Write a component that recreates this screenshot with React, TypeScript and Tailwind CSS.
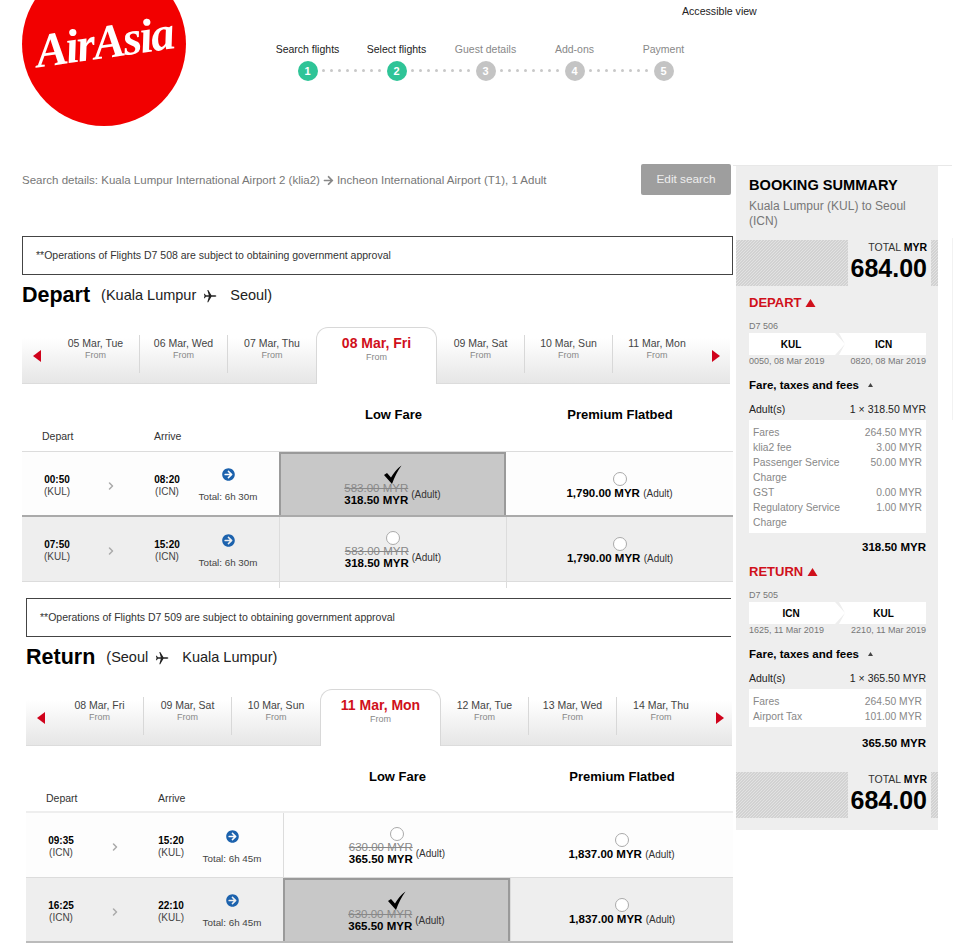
import { ChevronRight } from 'lucide-react';
import { FaArrowCircleRight, FaArrowRight } from 'react-icons/fa';

const steps = [
  { label: 'Search flights', done: true },
  { label: 'Select flights', done: true },
  { label: 'Guest details', done: false },
  { label: 'Add-ons', done: false },
  { label: 'Payment', done: false },
];

function Triangle({ className }: { className: string }) {
  return (
    <svg viewBox="0 0 10 8" className={className} fill="currentColor">
      <path d="M5 0 L10 8 L0 8 Z" />
    </svg>
  );
}

function Check() {
  return (
    <svg viewBox="0 0 20 20" className="w-[20px] h-[20px] text-black" fill="currentColor">
      <path d="M1 10 L4 8 L8 12.5 C10.5 8 14 3.5 18.5 0.5 C14.5 6 11.5 12 9 19 Z" />
    </svg>
  );
}

function PlaneIcon() {
  return (
    <svg viewBox="0 0 24 24" className="w-[14px] h-[14px] mx-[7px] text-[#222]" fill="currentColor">
      <path d="M23 12 C23 11 21.5 10.7 20 10.7 H14.5 L9 1.5 H7.4 L10 10.7 H5 L3 8 H1.6 L2.6 12 L1.6 16 H3 L5 13.3 H10 L7.4 22.5 H9 L14.5 13.3 H20 C21.5 13.3 23 13 23 12 Z" />
    </svg>
  );
}

function Steps() {
  return (
    <div className="flex w-[445px] ml-[77px] pt-[43px]">
      {steps.map((s, i) => (
        <div key={s.label} className="w-[89px] relative flex flex-col items-center">
          <span className={`text-[10.5px] leading-[13px] ${s.done ? 'text-[#222]' : 'text-[#888]'}`}>{s.label}</span>
          <div
            className={`mt-[5px] w-[20px] h-[20px] rounded-full flex items-center justify-center text-white text-[11px] font-bold ${s.done ? 'bg-[#2fc497]' : 'bg-[#c4c4c4]'}`}
          >
            {i + 1}
          </div>
          {i < 4 && (
            <div className="absolute left-[59px] top-[26px] flex gap-[5px]">
              {[0, 1, 2, 3, 4, 5, 6, 7].map((d) => (
                <span key={d} className="w-[3px] h-[3px] rounded-full bg-[#c8c8c8]" />
              ))}
            </div>
          )}
        </div>
      ))}
    </div>
  );
}

function DateStrip({ dates, active, className }: { dates: string[]; active: number; className: string }) {
  return (
    <div className={`flex h-[57px] bg-gradient-to-b from-white from-[20%] to-[#e6e6e6] border-b border-[#dcdcdc] ${className}`}>
      <div className="w-[30px] flex items-center pl-[11px] pt-[1px]">
        <div className="w-0 h-0 border-y-[6px] border-y-transparent border-r-[8px] border-r-[#d0021b]" />
      </div>
      {dates.map((d, i) =>
        i === active ? (
          <div
            key={d}
            className="w-[121px] -mb-px bg-white border border-b-0 border-[#d8d8d8] rounded-t-xl flex flex-col items-center pt-[7px]"
          >
            <span className="text-[14px] leading-[16px] font-bold text-[#d0101b]">{d}</span>
            <span className="text-[9px] leading-[11px] text-[#888] mt-[1px]">From</span>
          </div>
        ) : (
          <div key={d} className="w-[88px] pt-[8px] h-[46px] flex flex-col items-center">
            <div className={`w-full flex flex-col items-center h-[38px] ${i === active - 1 || i === dates.length - 1 ? '' : 'border-r border-[#d8d8d8]'}`}>
              <span className="text-[10.5px] leading-[14px] text-[#444] pt-[1px]">{d}</span>
              <span className="text-[9px] leading-[10px] text-[#888]">From</span>
            </div>
          </div>
        ),
      )}
      <div className="flex-1 flex items-center pl-[11px] pt-[1px]">
        <div className="w-0 h-0 border-y-[6px] border-y-transparent border-l-[8px] border-l-[#d0021b]" />
      </div>
    </div>
  );
}

type RowProps = {
  dep: string;
  arr: string;
  from: string;
  to: string;
  total: string;
  old: string;
  price: string;
  premium: string;
  gray: boolean;
  selected: boolean;
  bottom: string;
  tail?: boolean;
};

function FlightRow({ dep, arr, from, to, total, old, price, premium, gray, selected, bottom, tail }: RowProps) {
  return (
    <div className={`relative flex h-[65px] ${bottom} ${gray ? 'bg-[#eeeeee]' : 'bg-[#fdfdfd]'}`}>
      <div className="flex items-center pl-[6px] pt-[4px]">
        <div className="w-[58px] text-center text-[10px] leading-[12px] text-[#444]">
          <div className="font-bold text-black">{dep}</div>
          <div>({from})</div>
        </div>
        <div className="w-[50px] flex justify-center">
          <ChevronRight strokeWidth={3} className="w-[12px] h-[12px] text-[#aaa]" />
        </div>
        <div className="w-[62px] text-center text-[10px] leading-[12px] text-[#444]">
          <div className="font-bold text-black">{arr}</div>
          <div>({to})</div>
        </div>
        <div className="w-[60px] flex flex-col items-center text-[9.8px] leading-[12px] text-[#444] whitespace-nowrap">
          <FaArrowCircleRight className="w-[13px] h-[13px] text-[#1c62ad] mb-[10px]" />
          Total: {total}
        </div>
      </div>
      <div className="w-[21px]" />
      <div
        className={`w-[227px] flex flex-col items-center ${selected ? 'bg-[#c8c8c8] border-x-2 border-t-2 border-[#9a9a9a] pt-[11px]' : 'border-l border-[#dcdcdc] pt-[14px]'}`}
      >
        {selected ? <Check /> : <div className="w-[14px] h-[14px] rounded-full border border-[#aaa] bg-white" />}
        <div className={`flex items-end ${selected ? '-mt-[3px]' : 'mt-0'}`}>
          <div className="text-[11.5px] leading-[12px]">
            <div className="line-through text-[#888]">{old}</div>
            <div className="font-bold text-black">{price}</div>
          </div>
          <span className="text-[10px] leading-[10px] text-[#333] ml-[3px] mb-[6px]">(Adult)</span>
        </div>
      </div>
      <div className={`flex-1 flex flex-col items-center pt-[20px] ${gray ? 'border-l border-[#dcdcdc]' : ''}`}>
        <div className="w-[14px] h-[14px] rounded-full border border-[#aaa] bg-white" />
        <div className="text-[11.5px] leading-[14px] text-black">
          <span className="font-bold">{premium}</span> <span className="text-[10px] text-[#333]">(Adult)</span>
        </div>
      </div>
      {tail && (
        <>
          <div className="absolute left-[257px] top-[65px] w-px h-[6px] bg-[#dcdcdc]" />
          <div className="absolute left-[484px] top-[65px] w-px h-[6px] bg-[#dcdcdc]" />
        </>
      )}
    </div>
  );
}

function FlightSection({
  title,
  from,
  to,
  note,
  dates,
  active,
  children,
  className,
  noteClass,
  stripClass,
  headClass,
  labelClass,
  rowsClass,
}: {
  title: string;
  from: string;
  to: string;
  note: string;
  dates: string[];
  active: number;
  children: React.ReactNode;
  className: string;
  noteClass: string;
  stripClass: string;
  headClass: string;
  labelClass: string;
  rowsClass: string;
}) {
  return (
    <section className={className}>
      <div className={`h-[39px] border-[#444] flex items-center pl-[13px] text-[10.5px] text-[#333] ${noteClass}`}>{note}</div>
      <div className="h-[52px] flex items-start pt-[5px]">
        <h2 className="text-[21.5px] leading-[30px] font-bold text-black">{title}</h2>
        <div className="ml-[11px] mt-[1px] flex items-center h-[30px] text-[14.5px] text-[#222]">
          ({from}
          <PlaneIcon />
          <span className="ml-[6px]">{to})</span>
        </div>
      </div>
      <DateStrip dates={dates} active={active} className={stripClass} />
      <div className={`flex ${headClass}`}>
        <div className={`w-[258px] flex items-end text-[10.5px] leading-[14px] text-[#333] ${labelClass}`}>
          <span className="ml-[20px] w-[112px]">Depart</span>
          <span>Arrive</span>
        </div>
        <div className="w-[227px] text-center pt-[23px] text-[13px] leading-[15px] font-bold text-black">Low Fare</div>
        <div className="flex-1 text-center pt-[23px] text-[13px] leading-[15px] font-bold text-black">Premium Flatbed</div>
      </div>
      <div className={rowsClass}>{children}</div>
    </section>
  );
}

function TotalBar({ className }: { className: string }) {
  const hatch =
    'bg-[linear-gradient(135deg,#d2d2d2_25%,#e2e2e2_25%,#e2e2e2_50%,#d2d2d2_50%,#d2d2d2_75%,#e2e2e2_75%)] bg-[length:3px_3px]';
  return (
    <div className={`flex h-[46px] ${className}`}>
      <div className={`w-[112px] ${hatch}`} />
      <div className="flex-1 text-right pr-[4px] pt-[1px] bg-[#eeeeee]">
        <div className="text-[10.5px] leading-[12px] text-[#333]">
          TOTAL <span className="font-bold text-black">MYR</span>
        </div>
        <div className="text-[25px] leading-[31px] font-bold text-black">684.00</div>
      </div>
      <div className={`w-[7px] ${hatch}`} />
    </div>
  );
}

function Leg({
  label,
  code,
  a,
  b,
  ta,
  tb,
  each,
  fees,
  sum,
  sumClass,
}: {
  label: string;
  code: string;
  a: string;
  b: string;
  ta: string;
  tb: string;
  each: string;
  fees: { name: string; value: string }[];
  sum: string;
  sumClass: string;
}) {
  return (
    <div className="px-[13px]">
      <div className="flex items-center gap-[4px] text-[13px] leading-[16px] font-bold text-[#d0101b]">
        {label}
        <Triangle className="w-[11px] h-[8px]" />
      </div>
      <div className="mt-[10px] text-[9px] leading-[11px] text-[#777]">{code}</div>
      <div className="relative mt-[1px] w-[177px] h-[22px] bg-white flex items-center text-[10px] font-bold text-black">
        <span className="w-[84px] text-center">{a}</span>
        <span className="flex-1 text-center pl-[8px]">{b}</span>
        <div className="absolute left-[86px] top-0 w-[10px] h-[22px] bg-[#eeeeee] [clip-path:polygon(0_0,100%_50%,0_100%,40%_100%,100%_50%,40%_0)]" />
      </div>
      <div className="w-[177px] flex justify-between text-[9px] leading-[11px] mt-[1px] text-[#777]">
        <span>{ta}</span>
        <span>{tb}</span>
      </div>
      <div className="flex items-center gap-[5px] mt-[11px] text-[11.5px] leading-[14px] font-bold text-black">
        Fare, taxes and fees
        <Triangle className="w-[7px] h-[4px] ml-[3px] text-[#444]" />
      </div>
      <div className="w-[177px] flex justify-between mt-[10px] text-[10.5px] leading-[14px] text-[#222]">
        <span>Adult(s)</span>
        <span>1 × {each} MYR</span>
      </div>
      <div className="w-[177px] bg-white mt-[4px] px-[4px] pt-[5px] pb-[3px] text-[10.3px] leading-[15px] text-[#888]">
        {fees.map((f) => (
          <div key={f.name} className="flex justify-between">
            <span className="w-[100px]">{f.name}</span>
            <span>{f.value}</span>
          </div>
        ))}
      </div>
      <div className={`w-[177px] text-right text-[11.5px] leading-[14px] font-bold text-black ${sumClass}`}>{sum} MYR</div>
    </div>
  );
}

export default function App() {
  return (
    <div className="relative w-[959px] h-[946px] overflow-hidden bg-white font-['Liberation_Sans',Arial,sans-serif]">
      <div className="absolute left-[952px] top-[238px] w-px h-[182px] bg-[#f2f2f2]" />
      <div className="absolute left-[733px] top-[165px] w-[219px] h-px bg-[#e8e8e8]" />

      {/* Header */}
      <header className="flex h-[165px]">
        <div className="ml-[22px] -mt-[38px] w-[164px] h-[164px] rounded-full bg-[#f20000] flex items-center justify-center shrink-0">
          <span className="-rotate-[8deg] mt-[-4px] text-[48px] leading-[50px] italic font-bold tracking-[-2px] text-white font-['Liberation_Serif',serif]">
            AirAsia
          </span>
        </div>
        <Steps />
        <div className="ml-[-26px] pt-[5px] text-[10.6px] leading-[13px] text-[#222]">Accessible view</div>
      </header>

      <div className="flex">
        {/* Left column */}
        <div className="w-[736px] shrink-0">
          <div className="flex h-[71px] pl-[22px]">
            <div className="w-[619px] flex items-center h-[30px] pt-[1px] text-[11.5px] text-[#777]">
              Search details: Kuala Lumpur International Airport 2 (klia2)
              <FaArrowRight className="w-[11px] h-[11px] mx-[3px] text-[#888]" />
              Incheon International Airport (T1), 1 Adult
            </div>
            <button className="w-[90px] h-[31px] -mt-px bg-[#9e9e9e] rounded-[2px] text-[11.8px] text-[#eee]">Edit search</button>
          </div>

          <FlightSection
            className="ml-[22px] w-[711px]"
            noteClass="border"
            stripClass="w-[708px]"
            headClass="h-[67px]"
            labelClass="pb-[8px]"
            rowsClass="border-t border-[#dcdcdc]"
            title="Depart"
            from="Kuala Lumpur"
            to="Seoul"
            note="**Operations of Flights D7 508 are subject to obtaining government approval"
            dates={['05 Mar, Tue', '06 Mar, Wed', '07 Mar, Thu', '08 Mar, Fri', '09 Mar, Sat', '10 Mar, Sun', '11 Mar, Mon']}
            active={3}
          >
            <FlightRow dep="00:50" arr="08:20" from="KUL" to="ICN" total="6h 30m" old="583.00 MYR" price="318.50 MYR" premium="1,790.00 MYR" gray={false} selected bottom="border-b-2 border-[#aaaaaa]" />
            <FlightRow dep="07:50" arr="15:20" from="KUL" to="ICN" total="6h 30m" old="583.00 MYR" price="318.50 MYR" premium="1,790.00 MYR" gray selected={false} bottom="border-b border-[#dcdcdc]" tail />
          </FlightSection>

          <FlightSection
            className="ml-[26px] mt-[16px] w-[707px]"
            noteClass="border-y border-l w-[705px]"
            stripClass="w-[706px]"
            headClass="h-[65px]"
            labelClass="pb-[6px]"
            rowsClass="border-t-2 border-[#eeeeee]"
            title="Return"
            from="Seoul"
            to="Kuala Lumpur"
            note="**Operations of Flights D7 509 are subject to obtaining government approval"
            dates={['08 Mar, Fri', '09 Mar, Sat', '10 Mar, Sun', '11 Mar, Mon', '12 Mar, Tue', '13 Mar, Wed', '14 Mar, Thu']}
            active={3}
          >
            <FlightRow dep="09:35" arr="15:20" from="ICN" to="KUL" total="6h 45m" old="630.00 MYR" price="365.50 MYR" premium="1,837.00 MYR" gray={false} selected={false} bottom="border-b border-[#dcdcdc]" />
            <FlightRow dep="16:25" arr="22:10" from="ICN" to="KUL" total="6h 45m" old="630.00 MYR" price="365.50 MYR" premium="1,837.00 MYR" gray selected bottom="border-b-2 border-[#bbbbbb]" />
          </FlightSection>
        </div>

        {/* Booking summary */}
        <aside className="w-[202px] h-[665px] bg-[#eeeeee] border-t border-[#e4e4e4] shrink-0">
          <div className="px-[13px] pt-[11px] h-[74px]">
            <h3 className="text-[14.6px] leading-[16px] font-bold text-black">BOOKING SUMMARY</h3>
            <p className="mt-[6px] text-[12px] leading-[15px] text-[#777]">Kuala Lumpur (KUL) to Seoul (ICN)</p>
          </div>
          <TotalBar className="mb-[9px]" />
          <Leg
            label="DEPART"
            code="D7 506"
            a="KUL"
            b="ICN"
            ta="0050, 08 Mar 2019"
            tb="0820, 08 Mar 2019"
            each="318.50"
            fees={[
              { name: 'Fares', value: '264.50 MYR' },
              { name: 'klia2 fee', value: '3.00 MYR' },
              { name: 'Passenger Service Charge', value: '50.00 MYR' },
              { name: 'GST', value: '0.00 MYR' },
              { name: 'Regulatory Service Charge', value: '1.00 MYR' },
            ]}
            sum="318.50"
            sumClass="mt-[7px]"
          />
          <div className="h-[10px]" />
          <Leg
            label="RETURN"
            code="D7 505"
            a="ICN"
            b="KUL"
            ta="1625, 11 Mar 2019"
            tb="2210, 11 Mar 2019"
            each="365.50"
            fees={[
              { name: 'Fares', value: '264.50 MYR' },
              { name: 'Airport Tax', value: '101.00 MYR' },
            ]}
            sum="365.50"
            sumClass="mt-[9px]"
          />
          <TotalBar className="mt-[22px]" />
        </aside>
      </div>
    </div>
  );
}
